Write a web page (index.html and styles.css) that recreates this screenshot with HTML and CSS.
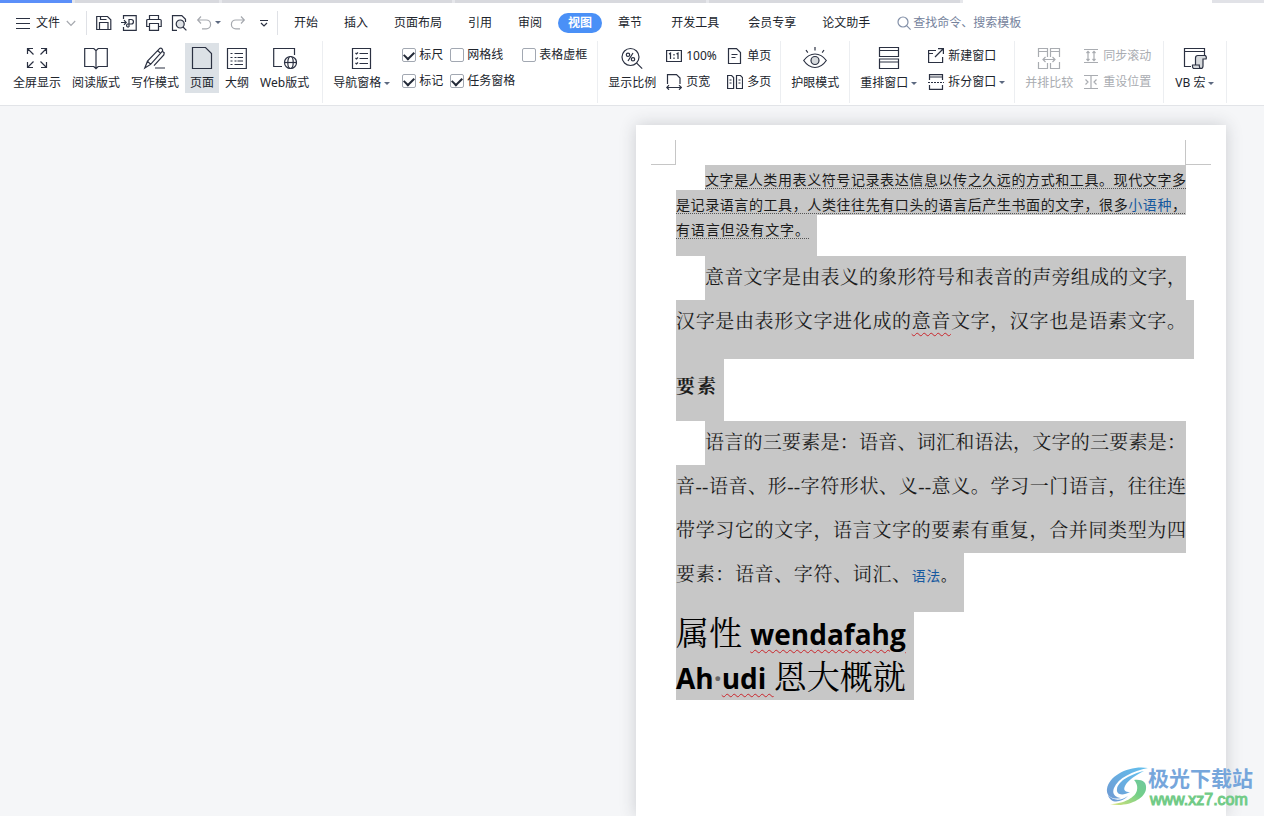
FILE: index.html
```html
<!DOCTYPE html>
<html lang="zh-CN">
<head>
<meta charset="utf-8">
<title>文字文稿</title>
<link rel="stylesheet" href="styles.css">
</head>
<body>
<div class="app">
  <div class="strip"><i class="doc-active"></i><i class="doc-a"></i><i class="doc-b"></i><i class="doc-b"></i><i class="doc-b"></i><i class="doc-space"></i><i class="doc-end"></i></div>

  <header class="menubar">
    <button class="file-btn">
      <svg width="14" height="14" viewBox="0 0 14 14"><path d="M0 2.5h14M0 7.5h14M0 12.5h14"/></svg>
      <span>文件</span>
      <svg class="muted" width="10" height="10" viewBox="0 0 10 10"><path d="M.8 3 5 7.4 9.2 3"/></svg>
    </button>
    <div class="quick">
      <button aria-label="保存"><svg width="16" height="16" viewBox="0 0 16 16"><path d="M.7 1.5h10.8l3.3 3.3v9.7H.7zM4.5 1.5v3h6M3.5 14.5v-7h8.5v7"/></svg></button>
      <button aria-label="输出为PDF"><svg width="16" height="16" viewBox="0 0 16 16"><path d="M2.5 4V.6h12.7v14.8H2.5V12M0 7.5h5M3 5.2 5.2 7.5 3 9.800M8 12V4.500h2.200a2.200 2.200 0 0 1 0 4.500H6.600a1.600 1.600 0 0 0 0 3H8"/></svg></button>
      <button aria-label="打印"><svg width="16" height="16" viewBox="0 0 16 16"><path d="M3.5 4.5v-4h9v4M3.5 11.5H.7V5.6q0-1.1 1.1-1.1h12.4q1 0 1 1.1v5.9h-2.7M3.5 8.5h9v6.8h-9z"/></svg></button>
      <button aria-label="打印预览"><svg width="16" height="16" viewBox="0 0 16 16"><path d="M6 15.3H1.5V.6h9.3l3.7 3.6V7M12 12l3.4 3.4"/><circle cx="9.2" cy="9" r="4" fill="#dfe2e6"/></svg></button>
      <button aria-label="撤销"><svg class="muted" width="16" height="16" viewBox="0 0 16 16"><path d="M5 1.5 1.7 5 5 8.5M1.7 5h8.5a4.4 4.4 0 0 1 0 8.8H6"/></svg></button>
      <button class="caret-btn" aria-label="撤销列表"><i class="caret"></i></button>
      <button aria-label="恢复"><svg class="muted" width="16" height="16" viewBox="0 0 16 16"><path d="M11 1.5 14.3 5 11 8.5M14.3 5H5.8a4.4 4.4 0 0 0 0 8.8H10"/></svg></button>
      <button class="more-btn" aria-label="自定义"><svg width="10" height="10" viewBox="0 0 10 10"><path d="M1 2.5h8M2 5l3 3 3-3"/></svg></button>
    </div>
    <nav class="tabs">
      <button>开始</button><button>插入</button><button>页面布局</button><button>引用</button><button>审阅</button><button class="on">视图</button><button>章节</button><button class="wide">开发工具</button><button>会员专享</button><button>论文助手</button>
    </nav>
    <label class="search">
      <svg width="14" height="16" viewBox="0 0 14 16"><circle cx="6" cy="7" r="5"/><path d="m9.6 10.6 4 4"/></svg>
      <input type="text" aria-label="查找" placeholder="查找命令、搜索模板">
    </label>
  </header>

  <section class="ribbon">
    <div class="group views">
      <button class="big"><svg width="24" height="24" viewBox="0 0 24 24"><path d="M2.5 8V2.5H8M2.5 2.5l6 6M16 2.5h5.5V8M21.5 2.5l-6 6M2.5 16v5.5H8M2.5 21.5l6-6M21.5 16v5.5H16M21.5 21.5l-6-6"/></svg><span>全屏显示</span></button>
      <button class="big"><svg width="24" height="24" viewBox="0 0 24 24"><path d="M.7 2.5h9.1L12 4.6l2.2-2.1h9.1v18h-9.1L12 22.6l-2.2-2.1H.7zM12 4.6v18"/></svg><span>阅读版式</span></button>
      <button class="big"><svg width="24" height="24" viewBox="0 0 24 24"><path d="M1.8 22 4.5 15.2 16.5 2.6q1.4-1 2.6.2 1.2 1.4.1 2.6L7.6 18.4zM4.5 15.2l3.1 3.2M14.7 4.5l2.8 2.9M19.6 5.5l1.6 1.2-.4 2.2L11 19.7M12 22h10"/></svg><span>写作模式</span></button>
      <button class="big on"><svg width="24" height="24" viewBox="0 0 24 24"><path d="M2.5 1.5h13l6 6v15h-19z"/></svg><span>页面</span></button>
      <button class="big"><svg width="24" height="24" viewBox="0 0 24 24"><path d="M2.5 2.5h18.8v20H2.5zM5.5 7.5h2M9.5 7.5H18M9.5 11.5h2M12.5 11.5H18M5.5 15h2M9.5 15h2M12.5 15H18M5.5 18.5h2M9.5 18.5H18M5.5 11.5h2"/></svg><span>大纲</span></button>
      <button class="big"><svg width="24" height="24" viewBox="0 0 24 24"><path d="M9 20.5H.7v-18h20.8V9"/><circle cx="17.5" cy="16.5" r="6"/><ellipse cx="17.5" cy="16.5" rx="2.7" ry="6"/><path d="M11.5 16.5h12"/></svg><span>Web版式</span></button>
    </div>
    <div class="group nav-group">
      <button class="big"><svg width="24" height="24" viewBox="0 0 24 24"><path d="M2.5 2.5h18v20h-18zM5.5 7l1 1 1.5-1.5M9.5 7.5H18M5.5 12l1 1 1.5-1.5M9.5 12.5H18M5.5 17l1 1 1.5-1.5M9.5 17.5H18"/></svg><span class="with-caret">导航窗格<i class="caret"></i></span></button>
      <div class="checks">
        <label><input type="checkbox" checked>标尺</label>
        <label><input type="checkbox">网格线</label>
        <label><input type="checkbox">表格虚框</label>
        <label><input type="checkbox" checked>标记</label>
        <label><input type="checkbox" checked>任务窗格</label>
      </div>
    </div>
    <div class="group zoom-group">
      <button class="big"><svg width="24" height="24" viewBox="0 0 24 24"><circle cx="10.500" cy="11" r="8.500"/><path d="m16.700 17.200 5.500 5.500M13 7l-5 8"/><circle cx="8" cy="8.800" r="1.700"/><circle cx="13" cy="13.300" r="1.700"/></svg><span>显示比例</span></button>
      <div class="smalls">
        <button><svg width="16" height="16" viewBox="0 0 16 16"><path d="M.6 2.500h14.800v11H.6zM3 6l1.500-1v6M10.500 6 12 5v6M8 6v1.500M8 9.500V11"/></svg>100%</button>
        <button><svg width="16" height="16" viewBox="0 0 16 16"><path d="M1.500.6h8l4 3.900v11H1.500zM4.500 6.500h6M4.500 9.500h4"/></svg>单页</button>
        <button><svg width="16" height="16" viewBox="0 0 16 16"><path d="M1.500 10V.6h9l3.500 3.500V10M.8 13.500h14.500M3 11.200.8 13.500 3 15.700M13 11.200l2.300 2.300L13 15.700"/></svg>页宽</button>
        <button><svg width="16" height="16" viewBox="0 0 16 16"><path d="M.6 1.500h4l2 2v11h-6zM9.500 1.500h4l2 2v11h-6zM2.500 6h2M2.500 9h2M11.500 6h2M11.500 9h2"/></svg>多页</button>
      </div>
    </div>
    <div class="group">
      <button class="big"><svg width="24" height="24" viewBox="0 0 24 24"><path d="M.7 14.500Q5.500 8 12 8t11.300 6.500Q18.500 21.500 12 21.500T.7 14.500zM12 1v3.500M3 4l1.800 2.600M21 4l-1.800 2.600"/><circle cx="12" cy="14.500" r="4" fill="#d6d9dc"/></svg><span>护眼模式</span></button>
    </div>
    <div class="group window-group">
      <button class="big"><svg width="24" height="24" viewBox="0 0 24 24"><path d="M2.500 1.500h19v9h-19zM2.500 4.500h19M2.500 13h19v9.500h-19zM2.500 16h19"/></svg><span class="with-caret">重排窗口<i class="caret"></i></span></button>
      <div class="smalls one">
        <button><svg width="16" height="16" viewBox="0 0 16 16"><path d="M8 2.500H.6v12h14V9M.6 5.500H5M7 9l8-8M10 .6h5.400V6"/></svg>新建窗口</button>
        <button><svg width="16" height="16" viewBox="0 0 16 16"><path d="M1.500 6V.6h13V6M1.500 3h13M1.500 11v4.400h13V11"/><path d="M0 8.500h16" stroke-dasharray="2 1"/></svg><span class="with-caret">拆分窗口<i class="caret"></i></span></button>
      </div>
    </div>
    <div class="group compare-group">
      <button class="big" disabled><svg width="24" height="24" viewBox="0 0 24 24"><path d="M1.500 11V2.500h9V11M1.500 5.500h9M13.500 11V2.500h9V11M13.500 5.500h9M1.500 16v6.500h9V17M13.500 17v5.500h9V16M6 13.500h12M8.500 11 6 13.500 8.500 16M15.500 11l2.500 2.500-2.500 2.500"/></svg><span>并排比较</span></button>
      <div class="smalls one">
        <button disabled><svg width="14" height="16" viewBox="0 0 14 16"><path d="M0 1.500h14M0 14.500h14M4 3v10M2.500 5 4 3.300 5.500 5M2.500 11 4 12.700 5.500 11M10 3v10M8.500 5 10 3.300 11.500 5M8.500 11l1.500 1.700 1.500-1.700"/></svg>同步滚动</button>
        <button disabled><svg width="14" height="16" viewBox="0 0 14 16"><path d="M0 1.500h14M0 14.500h14M7 1.500v13M1.500 5.500 4 8l-2.500 2.500M12.500 5.500 10 8l2.500 2.500"/></svg>重设位置</button>
      </div>
    </div>
    <div class="group macro-group">
      <button class="big"><svg width="24" height="24" viewBox="0 0 24 24"><path d="M8 20.500H1.500v-18h20V9M1.500 5.500h20"/><path d="M12.500 19v-7q0-2.500 2.300-2.500h7.500q1.500 1 .8 3.500H20v7q0 2.500-2.200 2.500H10.500q-1.300-1-1-3.500h6.800q-.3 3 1.500 3.500" fill="#d6d9dc"/></svg><span class="with-caret">VB 宏<i class="caret"></i></span></button>
    </div>
  </section>

  <main class="canvas">
    <article class="page">
      <i class="crop crop-left"></i><i class="crop crop-right"></i>
      <p class="small">
        <span class="line indent"><u>文字是人类用表义符号记录表达信息以传之久远的方式和工具。现代文字多</u></span>
        <span class="line"><u>是记录语言的工具，人类往往先有口头的语言后产生书面的文字，很多<a href="#xyz">小语种</a>，</u></span>
        <span class="line end short-a"><u>有语言但没有文字。</u></span>
      </p>
      <p class="body">
        <span class="line indent">意音文字是由表义的象形符号和表音的声旁组成的文字，</span>
        <span class="line end over">汉字是由表形文字进化成的<span class="spell">意音</span>文字，汉字也是语素文字。</span>
      </p>
      <h2 class="line">要素</h2>
      <p class="body">
        <span class="line indent">语言的三要素是：语音、词汇和语法，文字的三要素是：</span>
        <span class="line">音--语音、形--字符形状、义--意义。学习一门语言，往往连</span>
        <span class="line">带学习它的文字，语言文字的要素有重复，合并同类型为四</span>
        <span class="line end short-b">要素：语音、字符、词汇、<span class="note"><a href="#yf">语法</a>。</span></span>
      </p>
      <h1>
        <span class="line">属性 <b class="spell">wendafahg</b></span>
        <span class="line"><b>Ah<i class="space-dot">·</i><span class="spell">udi </span></b>恩大概就</span>
      </h1>
    </article>
    <aside class="mark">
      <svg width="42" height="42" viewBox="0 0 42 42">
        <defs>
          <linearGradient id="mb" x1="0" y1="1" x2="1" y2="0"><stop offset="0" stop-color="#6f9ad3"/><stop offset="1" stop-color="#62c0ee"/></linearGradient>
          <linearGradient id="mg" x1="0" y1="1" x2="1" y2="0"><stop offset="0" stop-color="#d9e27a"/><stop offset=".6" stop-color="#73cf88"/><stop offset="1" stop-color="#6fc7a0"/></linearGradient>
        </defs>
        <path fill="url(#mb)" d="M42 2C24-1 3 9 1 23c-1 7 5 11 14 9-7-1-9-5-7-10C12 12 27 5 42 2z"/>
        <path fill="url(#mb)" d="M38 5C25 8 12 15 11 23c-1 6 6 7 13 3-5 0-7-2-5-6C22 14 30 9 38 5zM2 29c5 6 13 6 20 1-6 6-17 9-20-1z"/>
        <path fill="url(#mg)" d="M28 14c8-1 13 2 12 9-1 10-19 19-36 15 14 0 26-7 27-14 1-4-1-8-3-10z"/>
      </svg>
      <div><strong>极光下载站</strong><span>www.xz7.com</span></div>
    </aside>
  </main>
</div>
</body>
</html>
```
FILE: styles.css
```css
* { box-sizing: border-box; }
body { margin: 0; background: #f5f6f8; color: #20242c; font: 12px/18px "Noto Sans", "Noto Sans CJK SC", sans-serif; }
button { display: flex; align-items: center; margin: 0; padding: 0; border: 0; background: none; color: inherit; font: inherit; white-space: nowrap; }
svg { display: block; flex: none; fill: none; stroke: #2b3142; stroke-width: 1.2; }
svg.muted { stroke: #a6a9af; }
p, h1, h2 { margin: 0; font-weight: 400; }
a { color: #17599f; text-decoration: none; }

.app { display: flex; flex-direction: column; height: 100vh; overflow: hidden; }
.strip { display: flex; gap: 3px; height: 3px; flex: none; background: #e6e7eb; }
.strip i { background: #d8d9de; }
.strip .doc-active { width: 72px; background: #5b8ff9; }
.strip .doc-a { width: 144px; }
.strip .doc-a + .doc-b { width: 230px; }
.strip .doc-b { width: 251px; }
.strip .doc-space { flex: 1; background: #fff; }
.strip .doc-end { width: 52px; margin-left: -3px; background: #e1e2e7; }

.menubar { display: flex; align-items: center; flex: none; height: 38px; padding: 1px 0 0 16px; background: #fff; }
.file-btn { gap: 6px; }
.quick { display: flex; align-items: center; gap: 9px; height: 24px; margin-left: 10px; padding: 0 9px; border: solid #dfe1e6; border-width: 0 1px; }
.caret { flex: none; border: 3px solid transparent; border-top-color: #5c6980; border-bottom: 0; }
.caret-btn { margin: 0 -1px 0 -6px; }
.caret-btn + button { margin-left: 1px; }
.more-btn { margin: 0 -1px 0 4px; }
.tabs { display: flex; gap: 6px; margin-left: 6px; }
.tabs button { height: 20px; padding: 0 10px; border-radius: 10px; }
.tabs .wide { padding: 0 13px; }
.tabs .on { background: #4a90f7; color: #fff; font-weight: 700; }
.search { display: flex; align-items: center; gap: 2px; margin-left: 17px; }
.search svg { stroke: #8390a8; }
.search input { width: 130px; padding: 0; border: 0; background: none; font: inherit; outline: 0; }
.search input::placeholder { color: #75829c; opacity: 1; }

.ribbon { display: flex; flex: none; background: #fff; border-bottom: 1px solid #e2e4e8; }
.group { display: flex; align-items: flex-start; height: 62px; padding: 2px 5px 0; border-right: 1px solid #eceef1; margin-bottom: 2px; }
.views { gap: 1px; padding: 2px 8px 0 8px; }
.big { flex-direction: column; gap: 4px; height: 50px; padding: 3px 5px 1px; }
.big.on { background: #dce1e6; }
.with-caret { display: flex; align-items: center; gap: 3px; }
button:disabled { color: #a9acb1; }
button:disabled svg { stroke: #a9acb1; }
.checks { display: grid; grid-template-columns: 48px 72px auto; row-gap: 8px; margin-left: 7px; padding-top: 3px; }
.checks label { display: flex; align-items: center; gap: 3px; white-space: nowrap; }
.checks input { appearance: none; display: grid; place-items: center; width: 14px; height: 14px; margin: 0; border: 1px solid #a2a8b2; border-radius: 2px; }
.checks input:checked::after { content: ""; width: 8px; height: 5px; margin-bottom: 2px; border: solid #232a38; border-width: 0 0 2px 2px; transform: rotate(-45deg); }
.nav-group { padding-right: 10px; }
.smalls { display: grid; grid-template-columns: 61px auto; row-gap: 8px; padding: 4px 4px 0 5px; }
.smalls.one { grid-template-columns: auto; }
.smalls button { gap: 4px; }
.window-group .smalls { padding-left: 6px; }
.compare-group .smalls { padding-left: 6px; padding-right: 7px; }
.compare-group .smalls button { gap: 5px; }
.macro-group { padding: 2px 7px 0 6px; }

.canvas { position: relative; display: flex; justify-content: flex-end; flex: 1; min-height: 0; padding: 19px 38px 0 0; }
.page { position: relative; width: 590px; padding: 40px; background: #fff; box-shadow: 0 0 16px rgba(40, 45, 55, .2); }
.crop { position: absolute; top: 15px; width: 25px; height: 25px; border: solid #c6c6c6; border-width: 0 0 1px; }
.crop-left { left: 15px; border-right-width: 1px; }
.crop-right { right: 15px; border-left-width: 1px; width: 26px; }
.page { color: #1b1b1b; font-family: "Liberation Serif", "Noto Serif CJK SC", "Noto Sans CJK SC", serif; }
.line { display: block; background: #c7c7c7; white-space: nowrap; text-align: justify; text-align-last: justify; }
.indent { margin-left: 29px; }
.small { font-size: 14px; line-height: 25px; font-family: "Noto Sans CJK SC", sans-serif; }
.small .line { height: 25px; padding-top: 2px; }
.small .end { height: 41px; }
.small u { text-decoration: underline dotted 1px #555; text-underline-offset: 3px; }
.short-a { width: 141px; padding-right: 8px; }
.body { font-size: 19px; line-height: 44px; }
.body .end { height: 59px; }
.over { width: 518px; padding-right: 8px; }
.short-b { width: 288px; padding-right: 9px; }
.note { font-size: 14px; font-family: "Noto Sans CJK SC", sans-serif; }
h2.line { width: 48px; height: 62px; padding-right: 8px; font-size: 19px; font-weight: 700; line-height: 55px; }
h1 { font-size: 33px; line-height: 44px; color: #000; }
h1 .line { width: fit-content; padding-right: 8px; text-align-last: left; }
h1 b { font: 700 28px/44px "Open Sans", sans-serif; }
.space-dot { color: #666; font-style: normal; }
.spell { text-decoration: underline wavy #c9252b 1px; text-underline-offset: 4px; }

.mark { position: absolute; right: 11px; bottom: 7px; display: flex; align-items: center; white-space: nowrap; }
.mark svg { stroke: none; }
.mark strong { display: block; color: #76a6db; font: 700 21px/27px "Noto Sans CJK SC", sans-serif; }
.mark span { display: block; padding-left: 2px; color: #72cb87; font: 400 16px/18px "Liberation Sans", sans-serif; -webkit-text-stroke: 1px #72cb87; }
```
